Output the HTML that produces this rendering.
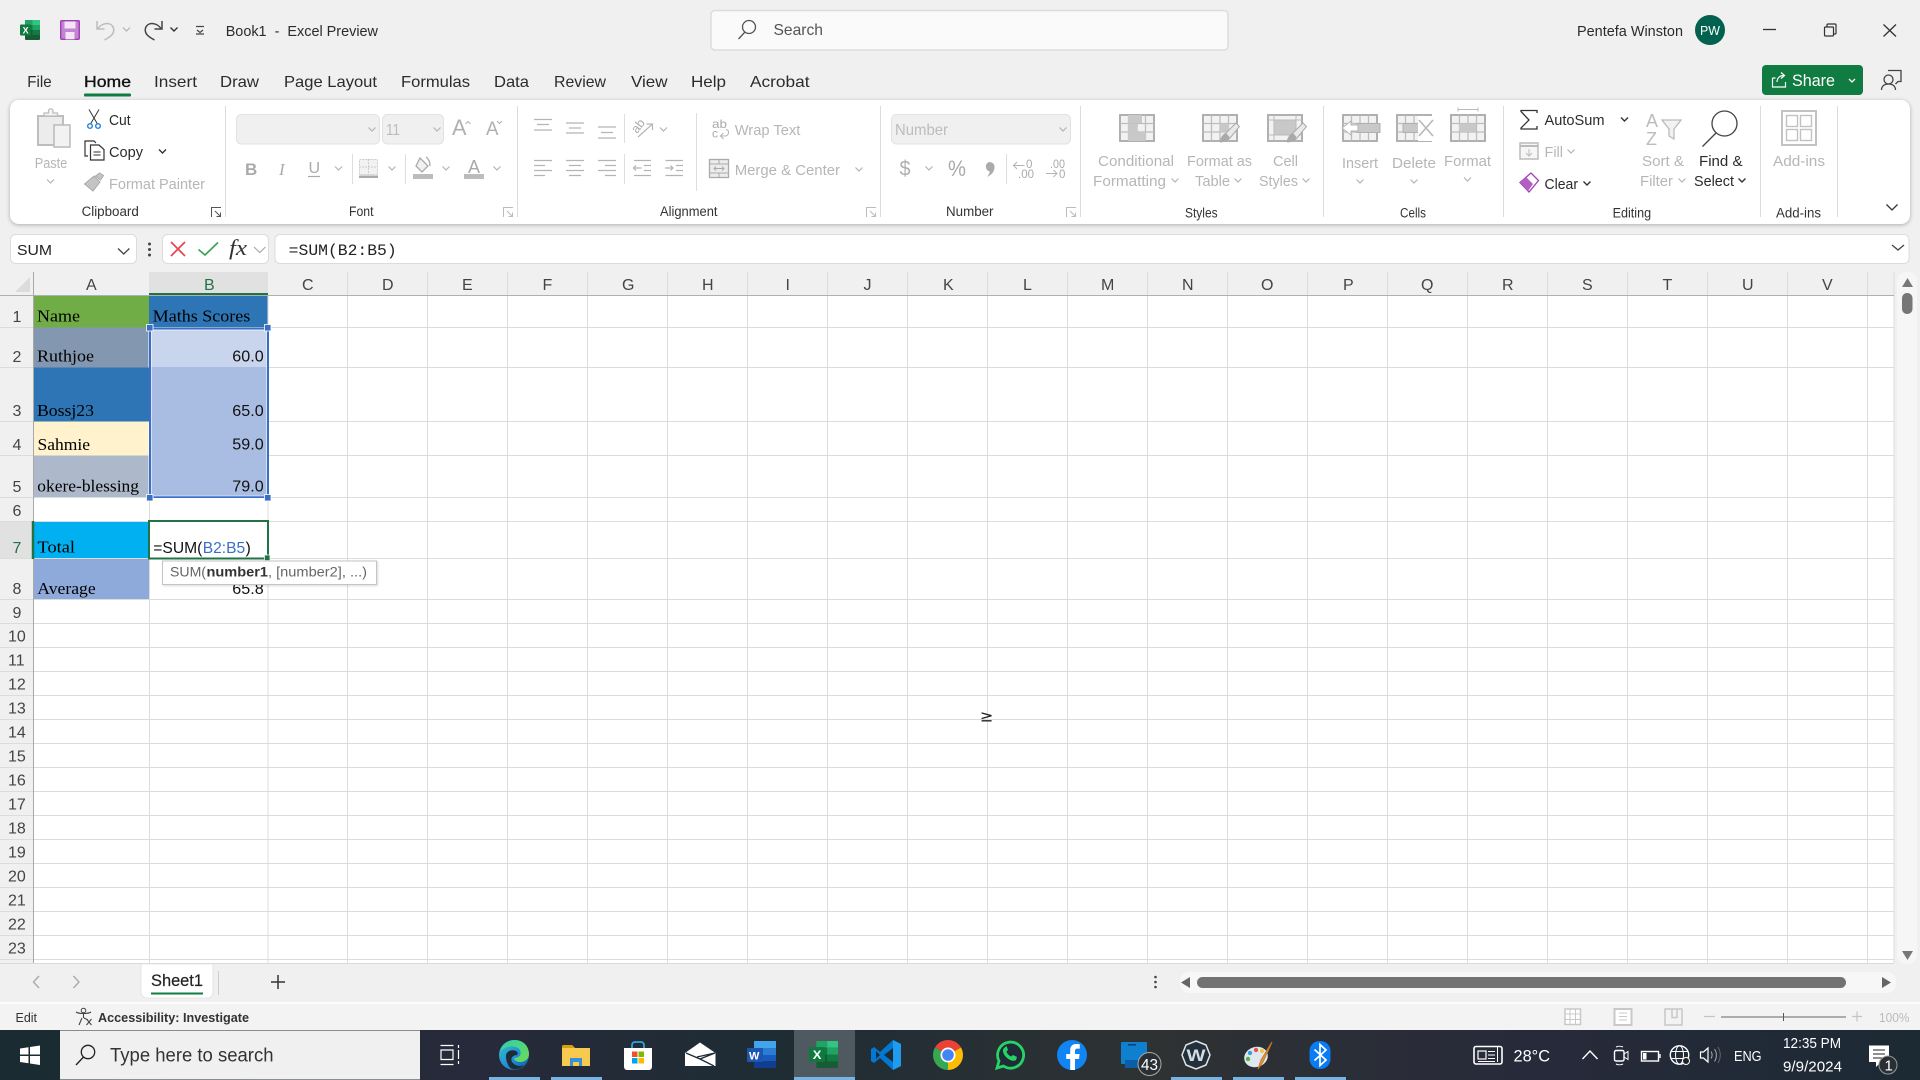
<!DOCTYPE html>
<html lang="en">
<head>
<meta charset="utf-8">
<title>Book1 - Excel Preview</title>
<style>
html,body{margin:0;padding:0;background:#f0f0f0;width:1920px;height:1080px;overflow:hidden}
svg{display:block}
text{font-family:"Liberation Sans",sans-serif;white-space:pre}
.d{fill:#2b2b2b;font-size:15px}
.g{fill:#b6b6b6;font-size:15px}
.l{fill:#333;font-size:13.5px}
.h{fill:#444;font-size:16px}
.s{fill:#000;font-size:16.5px;font-family:"Liberation Serif",serif}
.n{fill:#111;font-size:16px}
.w{fill:#fff}
.ic{fill:none;stroke:#b4b4b4;stroke-width:1.5}
.tray{fill:none;stroke:#fff;stroke-width:1.4}
</style>
</head>
<body>
<svg width="1920" height="1080" viewBox="0 0 1920 1080" xmlns="http://www.w3.org/2000/svg">
<defs>
<path id="cg" d="M-3.5-1.5 0 2 3.5-1.5" fill="none" stroke="#b4b4b4" stroke-width="1.2"/>
<path id="cd" d="M-3.5-1.5 0 2 3.5-1.5" fill="none" stroke="#333" stroke-width="1.4"/>
<g id="xl">
<rect x="5" width="15" height="20" rx="1" fill="#185c37"/>
<rect x="5" width="7.5" height="5" fill="#21a366"/><rect x="12.5" width="7.5" height="5" fill="#33c481"/>
<rect x="5" y="5" width="7.5" height="5" fill="#107c41"/><rect x="12.5" y="5" width="7.5" height="5" fill="#21a366"/>
<rect x="12.5" y="10" width="7.5" height="5" fill="#107c41"/>
<rect y="4.5" width="11" height="11" rx="1" fill="#0f7a3f"/>
<text x="2.6" y="13.5" class="w" style="font-size:9px;font-weight:bold">X</text>
</g>
<g id="tb">
<rect x="1" y="1" width="34" height="26" fill="#f2f2f2" stroke="#b0b0b0" stroke-width="2"/>
<path d="M1 9.5H35M1 18H35M9.5 1V27M18 1V27M26.500 1V27" stroke="#bdbdbd" stroke-width="1.300" fill="none"/>
</g>
<g id="br">
<path d="M0 0 3.500 3.500-6 15-10 18-15 19-13 14-10 10z" fill="#e9e9e9" stroke="#aaa" stroke-width="1"/>
<path d="M-10 10C-14 11-15 15-17 19-12 19-8 18-6.500 14z" fill="#aaa"/>
</g>
<linearGradient id="tk" x1="0" x2="1" y1="0" y2="0">
<stop offset="0" stop-color="#1c2b33"/><stop offset=".25" stop-color="#272a3a"/><stop offset=".4" stop-color="#1e2c34"/><stop offset=".6" stop-color="#2e3233"/><stop offset=".8" stop-color="#272a3a"/><stop offset="1" stop-color="#1c2a34"/>
</linearGradient>
<linearGradient id="ed" x1="0" x2="1" y1="0" y2="1">
<stop offset="0" stop-color="#36c6c0"/><stop offset=".55" stop-color="#1f8edc"/><stop offset="1" stop-color="#0c59a4"/>
</linearGradient>
<linearGradient id="eg" x1="0" x2="1" y1="0" y2="1">
<stop offset="0" stop-color="#2ecfb0"/><stop offset="1" stop-color="#6fdc50"/>
</linearGradient>
</defs>

<!-- window bg -->
<rect width="1920" height="1080" fill="#f0f0f0"/>

<!-- title bar -->
<use href="#xl" x="20" y="20"/>
<rect x="60.700" y="20.700" width="18.600" height="18.600" rx="1" fill="#c285d0" stroke="#a23fb6" stroke-width="1.400"/>
<rect x="64.500" y="21.500" width="11" height="7" fill="#f4e4f6"/>
<rect x="65.500" y="32" width="9" height="7.300" fill="#f4e4f6"/>
<path d="M97 21v8h7.500M97.800 29C101 23 111 21 113.500 28 115 34 110 37 104.500 40" fill="none" stroke="#bcbcbc" stroke-width="1.500"/>
<use href="#cg" x="126.500" y="29"/>
<path d="M162 21v8h-7.500M161.200 29C158 23 148 21 145.500 28 144 34 149 37 154.500 40" fill="none" stroke="#444" stroke-width="1.500"/>
<use href="#cd" x="174" y="29"/>
<path d="M196 26.500h8M197 30l3 2.500 3-2.500M196 34h8" fill="none" stroke="#444" stroke-width="1.200"/>
<text x="225.700" y="36" class="d" textLength="152.300" lengthAdjust="spacingAndGlyphs" style="font-size:15px">Book1  -  Excel Preview</text>

<rect x="711" y="10.500" width="517" height="39.500" rx="4" fill="#fafafa" stroke="#dcdcdc" stroke-width="1.500"/>
<circle cx="749" cy="27" r="6.500" fill="none" stroke="#555" stroke-width="1.300"/>
<path d="M745 32 738.500 39" stroke="#555" stroke-width="1.300"/>
<text x="773.500" y="35" fill="#555" style="font-size:16px" textLength="49.500" lengthAdjust="spacingAndGlyphs">Search</text>

<text x="1577" y="36" class="d" textLength="106" lengthAdjust="spacingAndGlyphs">Pentefa Winston</text>
<circle cx="1710" cy="30" r="15" fill="#00624f"/>
<text x="1700" y="35" class="w" style="font-size:13px" textLength="20" lengthAdjust="spacingAndGlyphs">PW</text>
<path d="M1763 29.500H1776" stroke="#333" stroke-width="1.300"/>
<path d="M1827 27v-2a1 1 0 0 1 1-1h7a1 1 0 0 1 1 1v8a1 1 0 0 1-1 1h-1" fill="none" stroke="#333" stroke-width="1.200"/>
<rect x="1824.500" y="27" width="9" height="9" rx="1" fill="none" stroke="#333" stroke-width="1.200"/>
<path d="M1883.500 24.500 1896 36.500M1896 24.500 1883.500 36.500" stroke="#333" stroke-width="1.300"/>

<!-- tabs -->
<text x="27.300" y="87" class="d" style="font-size:16px" textLength="24.300" lengthAdjust="spacingAndGlyphs">File</text>
<text x="84" y="87" style="font-size:16px;fill:#111;stroke:#111;stroke-width:.35" textLength="47" lengthAdjust="spacingAndGlyphs">Home</text>
<rect x="84" y="93.500" width="47" height="3" rx="1" fill="#107c41"/>
<text x="154" y="87" class="d" style="font-size:16px" textLength="43" lengthAdjust="spacingAndGlyphs">Insert</text>
<text x="220" y="87" class="d" style="font-size:16px" textLength="39" lengthAdjust="spacingAndGlyphs">Draw</text>
<text x="284" y="87" class="d" style="font-size:16px" textLength="93" lengthAdjust="spacingAndGlyphs">Page Layout</text>
<text x="401" y="87" class="d" style="font-size:16px" textLength="69" lengthAdjust="spacingAndGlyphs">Formulas</text>
<text x="494" y="87" class="d" style="font-size:16px" textLength="35" lengthAdjust="spacingAndGlyphs">Data</text>
<text x="554" y="87" class="d" style="font-size:16px" textLength="52" lengthAdjust="spacingAndGlyphs">Review</text>
<text x="631" y="87" class="d" style="font-size:16px" textLength="36.500" lengthAdjust="spacingAndGlyphs">View</text>
<text x="691" y="87" class="d" style="font-size:16px" textLength="35" lengthAdjust="spacingAndGlyphs">Help</text>
<text x="750" y="87" class="d" style="font-size:16px" textLength="59.500" lengthAdjust="spacingAndGlyphs">Acrobat</text>

<!-- share -->
<rect x="1762" y="65" width="101" height="30" rx="4" fill="#107c41"/>
<path d="M1772.500 78v9h13v-5M1777 82c0-4 3-6.500 6.500-6.500M1781 72.500l3.500 3-3.500 3M1772.500 78h3" fill="none" stroke="#fff" stroke-width="1.200"/>
<text x="1792" y="86" class="w" style="font-size:17px" textLength="43" lengthAdjust="spacingAndGlyphs">Share</text>
<path d="M1849 79l3 3 3-3" fill="none" stroke="#fff" stroke-width="1.300"/>
<circle cx="1888.500" cy="79.500" r="4.500" fill="none" stroke="#444" stroke-width="1.300"/>
<path d="M1881.500 90c0-4 3-6 7-6s7 2 7 6M1888 70.500h13v11h-3l-2.500 2.500" fill="none" stroke="#444" stroke-width="1.300"/>

<!-- ribbon -->
<rect x="10" y="100" width="1900" height="124" rx="9" fill="#fff" style="filter:drop-shadow(0 1px 2px rgba(0,0,0,.28))"/>
<path d="M225.500 106V217M517.500 106V217M880.500 106V217M1080.500 106V217M1323.500 106V217M1503.500 106V217M1760.500 106V217M1837.500 106V217" stroke="#dcdcdc" stroke-width="1"/>
<path d="M352.500 154V184M405.500 154V184M624.500 114V143M624.500 154V184M696.500 113V191M1006.500 154V184" stroke="#dedede" stroke-width="1"/>

<!-- clipboard -->
<rect x="38" y="116" width="25" height="29" fill="#ececec" stroke="#bdbdbd" stroke-width="2"/>
<path d="M44 116v-3h4.500v-2a2 2 0 0 1 4.500 0v2H57.500v3z" fill="#f4f4f4" stroke="#bdbdbd" stroke-width="1.300"/>
<rect x="54" y="125" width="16" height="22" fill="#f2f2f2" stroke="#bdbdbd" stroke-width="1.600"/>
<text x="34.700" y="168" class="g" style="font-size:15px" textLength="32.600" lengthAdjust="spacingAndGlyphs">Paste</text>
<use href="#cg" x="50.500" y="181"/>
<path d="M89 109.500 97.500 124M99 109.500 90.500 124" stroke="#333" stroke-width="1" fill="none"/>
<circle cx="90" cy="126" r="2.300" fill="none" stroke="#2e8ad6" stroke-width="1.500"/><circle cx="98" cy="126" r="2.300" fill="none" stroke="#2e8ad6" stroke-width="1.500"/>
<text x="109" y="125" class="d" textLength="21.600" lengthAdjust="spacingAndGlyphs">Cut</text>
<path d="M88 156h-3v-15h9l2 2M94 145h-3.500v15H104v-10.500L99 145z" fill="#fff" stroke="#333" stroke-width="1.200"/>
<path d="M93.500 152h7M93.500 155h7" stroke="#333"/>
<text x="109" y="157" class="d" textLength="34" lengthAdjust="spacingAndGlyphs">Copy</text>
<use href="#cd" x="162.500" y="151"/>
<path d="M84.500 184 94 176l6 6-7 9zM95.500 176l4-3 4 2.500-3 4.500z" fill="#c4c4c4" stroke="#aaa"/>
<text x="109" y="189" class="g" textLength="96" lengthAdjust="spacingAndGlyphs">Format Painter</text>
<text x="81.600" y="216" class="l" textLength="57.200" lengthAdjust="spacingAndGlyphs">Clipboard</text>
<path d="M211.500 217v-9.500h9.500M215 211l5 5M216.500 216.500h4v-4" fill="none" stroke="#555" stroke-width="1"/>

<!-- font -->
<rect x="236.500" y="114.500" width="143" height="29.500" rx="5" fill="#f0f0f0" stroke="#e2e2e2"/>
<use href="#cg" x="372" y="129"/>
<rect x="382.500" y="114.500" width="61" height="29.500" rx="5" fill="#f0f0f0" stroke="#e2e2e2"/>
<text x="386" y="135" fill="#bcbcbc" style="font-size:16px" textLength="14" lengthAdjust="spacingAndGlyphs">11</text>
<use href="#cg" x="437" y="129"/>
<text x="452" y="135" fill="#b0b0b0" style="font-size:22px" textLength="14.500" lengthAdjust="spacingAndGlyphs">A</text>
<path d="M465.500 124l2.500-2.500 2.500 2.500" fill="none" stroke="#b0b0b0"/>
<text x="486" y="135" fill="#b0b0b0" style="font-size:19px" textLength="12.500" lengthAdjust="spacingAndGlyphs">A</text>
<path d="M497 121l2.500 2.500 2.500-2.500" fill="none" stroke="#b0b0b0"/>
<text x="245" y="175" fill="#aaa" style="font-size:17px;font-weight:bold">B</text>
<text x="279" y="175" fill="#aaa" style="font-size:17px;font-style:italic;font-family:'Liberation Serif',serif">I</text>
<text x="308.500" y="173" fill="#aaa" style="font-size:16px">U</text>
<path d="M308 176.500H320" stroke="#aaa" stroke-width="1.200"/>
<use href="#cg" x="338.500" y="168"/>
<rect x="359.500" y="159.500" width="18" height="15" fill="#f2f2f2" stroke="#ccc" stroke-dasharray="2 1"/>
<path d="M368.500 159V175M359 167H378" stroke="#ccc" stroke-dasharray="2 1"/>
<rect x="359" y="175.500" width="19" height="2.500" fill="#aaa"/>
<use href="#cg" x="392" y="168"/>
<path d="M420 158l8 8-6 6-6-6zM426 157c3 2 4 5 4 9" fill="#f0f0f0" stroke="#aaa" stroke-width="1.300"/>
<rect x="413" y="174" width="20" height="5" fill="#bcbcbc"/>
<use href="#cg" x="446" y="168"/>
<text x="468" y="173" fill="#aaa" style="font-size:18px">A</text>
<rect x="464" y="174" width="20" height="5" fill="#bcbcbc"/>
<use href="#cg" x="497" y="168"/>
<text x="349" y="216" class="l" textLength="24.500" lengthAdjust="spacingAndGlyphs">Font</text>
<path d="M503.500 217v-9.500h9.500M507 211l5 5M508.500 216.500h4v-4" fill="none" stroke="#bbb" stroke-width="1"/>

<!-- alignment -->
<path d="M534 119.500h18M537 124.500h12M534 130h18M566 123h18M569 128h12M566 133h18M598 127h18M601 132.500h12M598 138h18" class="ic" style="stroke-width:1.300"/>
<path d="M534 160.500h18M534 165.500h11M534 170.500h18M534 175.500h11M566 160.500h18M569 165.500h12M566 170.500h18M569 175.500h12M598 160.500h18M605 165.500h11M598 170.500h18M605 175.500h11" class="ic" style="stroke-width:1.300"/>
<text transform="translate(637,134) rotate(-52)" fill="#aaa" style="font-size:12.500px">ab</text>
<path d="M638 137 652.500 124M646.500 124H652.500V130" class="ic" style="stroke-width:1.200"/>
<use href="#cg" x="663.500" y="129"/>
<path d="M634 160.500h17M644 165.500h7M644 170.500h7M634 175.500h17M633.500 168h8M636 165.500l-2.500 2.500 2.500 2.500" class="ic" style="stroke-width:1.200"/>
<path d="M665.500 160.500h17.500M676 165.500h7M676 170.500h7M665.500 175.500h17.500M665 168h8M670.500 165.500l2.500 2.500-2.500 2.500" class="ic" style="stroke-width:1.200"/>
<text x="712" y="128" fill="#aaa" style="font-size:12px" textLength="15" lengthAdjust="spacingAndGlyphs">ab</text>
<text x="712" y="137.500" fill="#aaa" style="font-size:12px">c</text>
<path d="M721 136h4c4 0 5-6 1-6.500M723.500 133l-3 3 3 3" class="ic" style="stroke-width:1.100"/>
<text x="734.700" y="135" class="g" textLength="65.700" lengthAdjust="spacingAndGlyphs">Wrap Text</text>
<rect x="709.500" y="159.500" width="19" height="18" fill="#ececec" stroke="#aaa" stroke-width="1.300"/>
<path d="M709 164h20M709 173h20M719 159v5M719 173v5M714 168.500h10M716 166.500l-2 2 2 2M722 166.500l2 2-2 2" fill="none" stroke="#aaa"/>
<text x="734.700" y="175" class="g" textLength="105.300" lengthAdjust="spacingAndGlyphs">Merge &amp; Center</text>
<use href="#cg" x="859" y="169"/>
<text x="660" y="216" class="l" textLength="57.500" lengthAdjust="spacingAndGlyphs">Alignment</text>
<path d="M866.500 217v-9.500h9.500M870 211l5 5M871.500 216.500h4v-4" fill="none" stroke="#bbb" stroke-width="1"/>

<!-- number -->
<rect x="891.500" y="114.500" width="179" height="29.500" rx="5" fill="#f0f0f0" stroke="#e2e2e2"/>
<text x="895" y="135" fill="#bcbcbc" style="font-size:16px" textLength="53" lengthAdjust="spacingAndGlyphs">Number</text>
<use href="#cg" x="1063" y="129"/>
<text x="899.500" y="175.500" fill="#b0b0b0" style="font-size:21px" textLength="11" lengthAdjust="spacingAndGlyphs">$</text>
<use href="#cg" x="929" y="168"/>
<text x="948" y="176" fill="#aaa" style="font-size:22px" textLength="18" lengthAdjust="spacingAndGlyphs">%</text>
<path d="M989 162a5 5 0 0 1 5.500 5c0 4.500-3 8-7.500 10 1.500-2 2.500-3.500 2.800-5.500A5 5 0 0 1 989 162z" fill="#aaa"/>
<text x="1026" y="168" fill="#aaa" style="font-size:11.500px">0</text>
<text x="1018" y="178" fill="#aaa" style="font-size:11.500px" textLength="16" lengthAdjust="spacingAndGlyphs">.00</text>
<path d="M1013.500 165.500h11M1017 162 1013.500 165.500 1017 169" class="ic" style="stroke-width:1"/>
<text x="1050" y="168" fill="#aaa" style="font-size:11.500px" textLength="15" lengthAdjust="spacingAndGlyphs">.00</text>
<text x="1059" y="178" fill="#aaa" style="font-size:11.500px">0</text>
<path d="M1046 173.500h11M1053.500 170 1057 173.500 1053.500 177" class="ic" style="stroke-width:1"/>
<text x="946" y="216" class="l" textLength="47.500" lengthAdjust="spacingAndGlyphs">Number</text>
<path d="M1066.500 217v-9.500h9.500M1070 211l5 5M1071.500 216.500h4v-4" fill="none" stroke="#bbb" stroke-width="1"/>

<!-- styles -->
<g transform="translate(1119,114)"><use href="#tb"/><rect x="9" y="1" width="14" height="8" fill="#c8c8c8"/><rect x="9" y="9.500" width="9" height="8.500" fill="#c8c8c8"/><rect x="9" y="18" width="18" height="9" fill="#c8c8c8"/></g>
<text x="1098" y="166" class="g" textLength="76" lengthAdjust="spacingAndGlyphs">Conditional</text>
<text x="1093" y="186" class="g" textLength="73" lengthAdjust="spacingAndGlyphs">Formatting</text>
<use href="#cg" x="1175" y="180"/>
<g transform="translate(1202,114)"><use href="#tb"/><rect x="18" y="9.500" width="9" height="8.500" fill="#c8c8c8"/><use href="#br" x="34" y="9"/></g>
<text x="1187" y="166" class="g" textLength="65" lengthAdjust="spacingAndGlyphs">Format as</text>
<text x="1195" y="186" class="g" textLength="35" lengthAdjust="spacingAndGlyphs">Table</text>
<use href="#cg" x="1238" y="180"/>
<g transform="translate(1267,114)"><rect x="1" y="1" width="34" height="26" fill="#f2f2f2" stroke="#b0b0b0" stroke-width="2"/><rect x="7" y="6" width="22" height="15" fill="#c8c8c8"/><path d="M1 6H35M7 1V27M1 21H35M29 1V27" stroke="#bbb"/><use href="#br" x="36" y="9"/></g>
<text x="1273" y="166" class="g" textLength="25" lengthAdjust="spacingAndGlyphs">Cell</text>
<text x="1259" y="186" class="g" textLength="39" lengthAdjust="spacingAndGlyphs">Styles</text>
<use href="#cg" x="1306" y="180"/>
<text x="1185" y="217.500" class="l" textLength="32.600" lengthAdjust="spacingAndGlyphs">Styles</text>

<!-- cells -->
<g transform="translate(1342,114)"><use href="#tb"/><rect x="15" y="9.500" width="23" height="9" fill="#c8c8c8" stroke="#b0b0b0"/><path d="M16 11h-7v-4L0 14l9 7v-4h7z" fill="#fff" stroke="#b6b6b6"/></g>
<text x="1342" y="168" class="g" textLength="36" lengthAdjust="spacingAndGlyphs">Insert</text>
<use href="#cg" x="1360" y="181"/>
<g transform="translate(1396,114)"><use href="#tb"/><rect x="7" y="9.500" width="18" height="9" fill="#c8c8c8" stroke="#b0b0b0"/><rect x="22" y="2" width="16" height="25" fill="#fff"/><path d="M23 6 37 22M37 6 23 22" stroke="#b6b6b6" stroke-width="1.500"/></g>
<text x="1392" y="168" class="g" textLength="44" lengthAdjust="spacingAndGlyphs">Delete</text>
<use href="#cg" x="1414" y="181"/>
<g transform="translate(1450,114)"><use href="#tb"/><rect x="9" y="9.500" width="17" height="8.500" fill="#c8c8c8"/></g>
<path d="M1458 109.500h20M1458 107.500v4M1478 107.500v4" stroke="#bbb"/>
<text x="1444" y="166" class="g" textLength="47" lengthAdjust="spacingAndGlyphs">Format</text>
<use href="#cg" x="1467.500" y="179"/>
<text x="1400" y="217.500" class="l" textLength="26" lengthAdjust="spacingAndGlyphs">Cells</text>

<!-- editing -->
<path d="M1537 113v-2.500h-16v1l8 8.500-8 8v1h16V126" fill="none" stroke="#333" stroke-width="1.300"/>
<text x="1544.500" y="125" class="d" textLength="60" lengthAdjust="spacingAndGlyphs">AutoSum</text>
<use href="#cd" x="1624.500" y="119"/>
<rect x="1520" y="143" width="18" height="16" fill="#f6f6f6" stroke="#bbb" stroke-width="1.500"/>
<path d="M1520 146h18" stroke="#bbb" stroke-width="2"/><path d="M1529 149v7M1526 153l3 3 3-3" fill="none" stroke="#bbb"/>
<text x="1544.500" y="157" class="g" textLength="18.500" lengthAdjust="spacingAndGlyphs">Fill</text>
<use href="#cg" x="1571" y="151"/>
<path d="M1520 182.500 1531 173l7.500 7.500-9.500 11.500z" fill="#fff" stroke="#a23fb6" stroke-width="1.300"/>
<path d="M1520 182.500 1526 177l7 7-5 7z" fill="#b25ec4"/>
<text x="1544.500" y="189" class="d" textLength="33.500" lengthAdjust="spacingAndGlyphs">Clear</text>
<use href="#cd" x="1587" y="183"/>
<text x="1646" y="127" fill="#bcbcbc" style="font-size:18px">A</text>
<text x="1646" y="145" fill="#bcbcbc" style="font-size:18px">Z</text>
<path d="M1662 120h19l-7 9v10l-5-3v-7z" fill="#f2f2f2" stroke="#bbb" stroke-width="1.300"/>
<text x="1642" y="166" class="g" textLength="42" lengthAdjust="spacingAndGlyphs">Sort &amp;</text>
<text x="1640" y="186" class="g" textLength="33" lengthAdjust="spacingAndGlyphs">Filter</text>
<use href="#cg" x="1682" y="180"/>
<circle cx="1724.500" cy="123.500" r="12.500" fill="#fff" stroke="#444" stroke-width="1.300"/>
<path d="M1716 133 1702.500 146.500" stroke="#444" stroke-width="1.300"/>
<text x="1699" y="166" class="d" textLength="43.500" lengthAdjust="spacingAndGlyphs">Find &amp;</text>
<text x="1694" y="186" class="d" textLength="40" lengthAdjust="spacingAndGlyphs">Select</text>
<use href="#cd" x="1742" y="180"/>
<text x="1612.600" y="217.500" class="l" textLength="38.500" lengthAdjust="spacingAndGlyphs">Editing</text>

<!-- add-ins -->
<rect x="1782" y="111" width="34" height="34" fill="none" stroke="#c2c2c2" stroke-width="2"/>
<rect x="1786.500" y="115.500" width="11" height="11" fill="none" stroke="#c2c2c2" stroke-width="1.400"/>
<rect x="1800.500" y="115.500" width="11" height="11" fill="none" stroke="#c2c2c2" stroke-width="1.400"/>
<rect x="1786.500" y="129.500" width="11" height="11" fill="none" stroke="#c2c2c2" stroke-width="1.400"/>
<rect x="1800.500" y="129.500" width="11" height="11" fill="none" stroke="#c2c2c2" stroke-width="1.400"/>
<text x="1773" y="166" class="g" textLength="52" lengthAdjust="spacingAndGlyphs">Add-ins</text>
<text x="1776" y="217.500" class="l" textLength="45" lengthAdjust="spacingAndGlyphs">Add-ins</text>
<path d="M1886.500 204.500l5.500 5.500 5.500-5.500" fill="none" stroke="#333" stroke-width="1.300"/>

<!-- formula bar -->
<rect x="10.500" y="234.500" width="126" height="29" rx="5" fill="#fff" stroke="#dcdcdc"/>
<text x="17" y="255" fill="#222" style="font-size:15px" textLength="35" lengthAdjust="spacingAndGlyphs">SUM</text>
<path d="M118 248.500l5.700 5.500 5.700-5.500" fill="none" stroke="#444" stroke-width="1.300"/>
<circle cx="149.500" cy="244" r="1.500" fill="#444"/><circle cx="149.500" cy="249.500" r="1.500" fill="#444"/><circle cx="149.500" cy="255" r="1.500" fill="#444"/>
<rect x="162.500" y="234.500" width="106" height="29" rx="5" fill="#fff" stroke="#dcdcdc"/>
<path d="M171 242 185 256M185 242 171 256" stroke="#e8434f" stroke-width="1.700"/>
<path d="M198.500 249.500 205 255 218 242.500" fill="none" stroke="#3aa655" stroke-width="1.700"/>
<text x="229" y="255" fill="#333" style="font-size:22px;font-style:italic;font-family:'Liberation Serif',serif" textLength="18" lengthAdjust="spacingAndGlyphs">fx</text>
<path d="M254 247l5.700 5.500 5.700-5.500" fill="none" stroke="#aaa" stroke-width="1.200"/>
<rect x="275" y="234.500" width="1634" height="29" rx="5" fill="#fff" stroke="#dcdcdc"/>
<text x="288.700" y="255" fill="#222" style="font-size:16px;font-family:'Liberation Mono',monospace" textLength="108" lengthAdjust="spacingAndGlyphs">=SUM(B2:B5)</text>
<path d="M1892 245l6 5 6-5" fill="none" stroke="#444" stroke-width="1.300"/>

<!-- sheet grid -->
<rect x="33" y="295" width="1861" height="668" fill="#fff"/>
<rect x="149" y="272" width="119" height="23" fill="#e1e1e1"/>
<rect x="0" y="521" width="33" height="38" fill="#e1e1e1"/>

<!-- cell fills -->
<rect x="33.500" y="296" width="115.500" height="31.500" fill="#70ad47"/>
<rect x="149" y="296" width="119" height="31.500" fill="#2e75b6"/>
<rect x="33.500" y="327.500" width="115" height="40" fill="#8497b0"/>
<rect x="33.500" y="367.500" width="115.500" height="54" fill="#2e75b6"/>
<rect x="33.500" y="421.500" width="115" height="34" fill="#fff2cc"/>
<rect x="33.500" y="455.500" width="115" height="42" fill="#adb9ca"/>
<rect x="33.500" y="521.500" width="115.500" height="37" fill="#00b0f0"/>
<rect x="33.500" y="558.500" width="116.500" height="40.500" fill="#8eaadb"/>

<!-- gridlines -->
<path d="M149.500 497V963M268 295V963M347.500 272V963M427.500 272V963M507.500 272V963M587.500 272V963M667.500 272V963M747.500 272V963M827.500 272V963M907.500 272V963M987.500 272V963M1067.500 272V963M1147.500 272V963M1227.500 272V963M1307.500 272V963M1387.500 272V963M1467.500 272V963M1547.500 272V963M1627.500 272V963M1707.500 272V963M1787.500 272V963M1867.500 272V963M1894 272V963" stroke="#dcdcdc" fill="none"/>
<path d="M0 327.500H33M149 327.500H1894M0 367.500H33M268 367.500H1894M0 421.500H33M268 421.500H1894M0 455.500H33M268 455.500H1894M0 497.500H33M268 497.500H1894M0 521.500H1894M0 558.500H1894M0 599.500H1894M0 623.500H1894M0 647.500H1894M0 671.500H1894M0 695.500H1894M0 719.500H1894M0 743.500H1894M0 767.500H1894M0 791.500H1894M0 815.500H1894M0 839.500H1894M0 863.500H1894M0 887.500H1894M0 911.500H1894M0 935.500H1894M0 959.500H1894" stroke="#dcdcdc" fill="none"/>
<path d="M0 295.500H1894" stroke="#b0b0b0" stroke-width="1"/>
<path d="M33.500 272V963" stroke="#a8a8a8"/>
<path d="M149 294H268" stroke="#217346" stroke-width="2"/>
<path d="M33 521V559" stroke="#217346" stroke-width="2.500"/>
<path d="M30 277V292H15z" fill="#dcdcdc"/>

<!-- headers -->
<text x="86" y="290" class="h">A</text><text x="204" y="290" style="fill:#217346;font-size:16px">B</text>
<text x="302" y="290" class="h">C</text><text x="382" y="290" class="h">D</text><text x="462" y="290" class="h">E</text><text x="542.500" y="290" class="h">F</text><text x="622" y="290" class="h">G</text><text x="702" y="290" class="h">H</text><text x="785.500" y="290" class="h">I</text><text x="863.500" y="290" class="h">J</text><text x="943" y="290" class="h">K</text><text x="1023" y="290" class="h">L</text><text x="1101" y="290" class="h">M</text><text x="1182" y="290" class="h">N</text><text x="1261" y="290" class="h">O</text><text x="1343" y="290" class="h">P</text><text x="1421" y="290" class="h">Q</text><text x="1502" y="290" class="h">R</text><text x="1582" y="290" class="h">S</text><text x="1662.500" y="290" class="h">T</text><text x="1742" y="290" class="h">U</text><text x="1822" y="290" class="h">V</text>
<text x="12.500" y="322" class="h">1</text><text x="12.500" y="362" class="h">2</text><text x="12.500" y="416" class="h">3</text><text x="12.500" y="450" class="h">4</text><text x="12.500" y="492" class="h">5</text><text x="12.500" y="516" class="h">6</text><text x="12.500" y="553" style="fill:#217346;font-size:16px">7</text><text x="12.500" y="594" class="h">8</text><text x="12.500" y="618" class="h">9</text>
<text x="8" y="641.500" class="h">10</text><text x="8" y="665.500" class="h">11</text><text x="8" y="689.500" class="h">12</text><text x="8" y="713.500" class="h">13</text><text x="8" y="737.500" class="h">14</text><text x="8" y="761.500" class="h">15</text><text x="8" y="785.500" class="h">16</text><text x="8" y="809.500" class="h">17</text><text x="8" y="833.500" class="h">18</text><text x="8" y="857.500" class="h">19</text><text x="8" y="881.500" class="h">20</text><text x="8" y="905.500" class="h">21</text><text x="8" y="929.500" class="h">22</text><text x="8" y="953.500" class="h">23</text>

<!-- selection -->
<rect x="150" y="328.500" width="118" height="168.500" fill="#a9bce2"/>
<rect x="151" y="329.500" width="115.500" height="37.500" fill="#c9d5ec"/>
<rect x="150" y="328.500" width="118" height="168.500" fill="none" stroke="#3a6fc8" stroke-width="2"/>
<path d="M151.500 330H266.500V496H151.500z" fill="none" stroke="#fff" stroke-width=".8" opacity=".7"/>
<rect x="146.500" y="324.500" width="6.500" height="6.500" fill="#3a6fc8" stroke="#fff" stroke-width=".8"/>
<rect x="264.500" y="324.500" width="6.500" height="6.500" fill="#3a6fc8" stroke="#fff" stroke-width=".8"/>
<rect x="146.500" y="494.500" width="6.500" height="6.500" fill="#3a6fc8" stroke="#fff" stroke-width=".8"/>
<rect x="264.500" y="494.500" width="6.500" height="6.500" fill="#3a6fc8" stroke="#fff" stroke-width=".8"/>

<!-- cell text -->
<text x="37" y="321.700" class="s" textLength="43" lengthAdjust="spacingAndGlyphs">Name</text>
<text x="152.700" y="321.700" class="s" textLength="97.600" lengthAdjust="spacingAndGlyphs">Maths Scores</text>
<text x="37" y="361.700" class="s" textLength="57" lengthAdjust="spacingAndGlyphs">Ruthjoe</text>
<text x="37" y="416" class="s" textLength="57" lengthAdjust="spacingAndGlyphs">Bossj23</text>
<text x="37.500" y="450" class="s" textLength="52.500" lengthAdjust="spacingAndGlyphs">Sahmie</text>
<text x="37.300" y="491.700" class="s" textLength="101.700" lengthAdjust="spacingAndGlyphs">okere-blessing</text>
<text x="37.500" y="552.700" class="s" textLength="37.500" lengthAdjust="spacingAndGlyphs">Total</text>
<text x="37.300" y="594" class="s" textLength="58.400" lengthAdjust="spacingAndGlyphs">Average</text>
<text x="232.300" y="361.500" class="n" textLength="31.400" lengthAdjust="spacingAndGlyphs">60.0</text>
<text x="232.300" y="416" class="n" textLength="31.400" lengthAdjust="spacingAndGlyphs">65.0</text>
<text x="232.300" y="449.500" class="n" textLength="31.400" lengthAdjust="spacingAndGlyphs">59.0</text>
<text x="232.300" y="491.500" class="n" textLength="31.400" lengthAdjust="spacingAndGlyphs">79.0</text>
<text x="232.300" y="594" class="n" textLength="31.400" lengthAdjust="spacingAndGlyphs">65.8</text>

<!-- active edit cell -->
<rect x="149" y="521" width="119" height="37.500" fill="#fff" stroke="#217346" stroke-width="2"/>
<rect x="264.500" y="555" width="5.500" height="5.500" fill="#217346" stroke="#fff" stroke-width=".7"/>
<text x="153.300" y="553" fill="#111" style="font-size:16px" textLength="49" lengthAdjust="spacingAndGlyphs">=SUM(</text>
<text x="202.700" y="553" fill="#3a6fc8" style="font-size:16px" textLength="42.500" lengthAdjust="spacingAndGlyphs">B2:B5</text>
<text x="245.500" y="553" fill="#111" style="font-size:16px">)</text>

<!-- tooltip -->
<rect x="162.500" y="561" width="214" height="23.500" fill="#fff" stroke="#c4c4c4" style="filter:drop-shadow(1px 1px 1px rgba(0,0,0,.15))"/>
<text x="170" y="576.500" fill="#666" style="font-size:14px" textLength="36" lengthAdjust="spacingAndGlyphs">SUM(</text>
<text x="206.500" y="576.500" fill="#333" style="font-size:14px;font-weight:bold" textLength="61.500" lengthAdjust="spacingAndGlyphs">number1</text>
<text x="268" y="576.500" fill="#666" style="font-size:14px" textLength="99" lengthAdjust="spacingAndGlyphs">, [number2], ...)</text>

<!-- cursor -->
<text x="980" y="721.500" fill="#222" style="font-size:16px;font-family:'DejaVu Sans',sans-serif">≥</text>

<!-- v scrollbar -->
<rect x="1897" y="272" width="20" height="692" rx="9" fill="#f6f6f6"/>
<path d="M1907.500 278 1913 287H1902z" fill="#777"/>
<rect x="1902" y="293" width="10.500" height="21" rx="5" fill="#777"/>
<path d="M1907.500 960 1913 951H1902z" fill="#777"/>

<!-- bottom bars -->
<path d="M0 963.500H1894" stroke="#dadada"/>
<rect x="0" y="964" width="1920" height="39" fill="#f0f0f0"/>
<path d="M141 964H213V992a6 6 0 0 1-6 6H147a6 6 0 0 1-6-6z" fill="#fff" stroke="#e0e0e0" stroke-width=".8"/>
<text x="151" y="986" style="font-size:17px;fill:#222;stroke:#222;stroke-width:.2" textLength="52" lengthAdjust="spacingAndGlyphs">Sheet1</text>
<rect x="151" y="992.500" width="52" height="2" fill="#107c41"/>
<path d="M218.500 971V995" stroke="#ccc"/>
<path d="M271 982H285M278 975V989" stroke="#333" stroke-width="1.500"/>
<path d="M39 976 33.500 982 39 988M73.500 976 79 982 73.500 988" fill="none" stroke="#aaa" stroke-width="1.400"/>
<circle cx="1155.500" cy="977" r="1.300" fill="#444"/><circle cx="1155.500" cy="982" r="1.300" fill="#444"/><circle cx="1155.500" cy="987" r="1.300" fill="#444"/>
<rect x="1180" y="972" width="716" height="21" rx="9" fill="#f7f7f7"/>
<path d="M1181 982.500 1190 977V988z" fill="#666"/>
<rect x="1197" y="977" width="649" height="11" rx="5.500" fill="#727272"/>
<path d="M1891 982.500 1882 977V988z" fill="#666"/>

<!-- status bar -->
<rect x="0" y="1003" width="1920" height="27" fill="#f3f3f3"/>
<path d="M0 1003H1920" stroke="#fff" stroke-width="1.500"/>
<text x="15.500" y="1022" fill="#333" style="font-size:13px" textLength="21.500" lengthAdjust="spacingAndGlyphs">Edit</text>
<circle cx="83.500" cy="1010.500" r="2.300" fill="none" stroke="#444"/>
<path d="M76 1012c3 2 12 2 15 0M83.500 1014v4M79 1025l3-7M84 1018l4 2M86.500 1019l5 6M91.500 1019l-5 6" fill="none" stroke="#444" stroke-width="1.100"/>
<text x="98" y="1022" fill="#333" style="font-size:13px;font-weight:bold" textLength="151" lengthAdjust="spacingAndGlyphs">Accessibility: Investigate</text>
<rect x="1565" y="1009" width="15.500" height="15.500" fill="#fff" stroke="#c8c8c8" stroke-width="1.500"/>
<path d="M1570 1009v15.500M1575.500 1009v15.500M1565 1014h15.500M1565 1019.500h15.500" stroke="#c8c8c8"/>
<rect x="1614.500" y="1009" width="17" height="16" fill="#fff" stroke="#c8c8c8" stroke-width="2"/>
<path d="M1619 1013h8M1619 1016.500h8M1619 1020h8" stroke="#c8c8c8"/>
<path d="M1665 1009h17v16h-17zM1672 1009v8.500h5V1009" fill="none" stroke="#c8c8c8" stroke-width="1.500"/>
<path d="M1704 1016.500h11M1852 1016.500h10M1857 1011.500v10" stroke="#c4c4c4" stroke-width="1.200"/>
<path d="M1721 1017H1846" stroke="#666"/>
<path d="M1783.500 1013V1021" stroke="#555"/>
<text x="1879" y="1022" fill="#bbb" style="font-size:13px" textLength="30.500" lengthAdjust="spacingAndGlyphs">100%</text>

<!-- taskbar -->
<rect x="0" y="1030" width="1920" height="50" fill="url(#tk)"/>
<rect x="0" y="1030" width="60" height="50" fill="#1b2b32"/>
<path d="M20 1048.500 28.500 1047.300V1054.500H20zM30 1047 40 1045.500V1054.500H30zM20 1056H28.500V1063.200L20 1062zM30 1056H40V1065L30 1063.500z" fill="#fff"/>
<rect x="60" y="1030.500" width="360" height="49" fill="#f0f0f0"/>
<circle cx="88" cy="1052" r="6.700" fill="none" stroke="#222" stroke-width="1.300"/>
<path d="M83.500 1057 76 1065" stroke="#222" stroke-width="1.400"/>
<text x="110" y="1061.700" fill="#333" style="font-size:19px" textLength="163.500" lengthAdjust="spacingAndGlyphs">Type here to search</text>

<path d="M440.500 1045.500h13M440.500 1064.500h13M441 1050h12v9.500h-12zM458.500 1045v3M458.500 1050v9M458.500 1061v3" fill="none" stroke="#fff" stroke-width="1.200"/>

<!-- active excel -->
<rect x="794" y="1030" width="61" height="50" fill="#4f5a60"/>
<!-- underlines -->
<rect x="489" y="1077" width="51" height="3" fill="#76b4e3"/>
<rect x="551" y="1077" width="51" height="3" fill="#76b4e3"/>
<rect x="794" y="1077" width="61" height="3" fill="#76b4e3"/>
<rect x="1171" y="1077" width="51" height="3" fill="#76b4e3"/>
<rect x="1233" y="1077" width="51" height="3" fill="#76b4e3"/>
<rect x="1295" y="1077" width="51" height="3" fill="#76b4e3"/>

<!-- edge -->
<circle cx="514" cy="1055" r="15" fill="url(#ed)"/>
<path d="M500 1052C502 1043 510 1040 515 1040 523 1040 529 1046 529 1054 529 1059 525 1062 520 1062 516 1062 514 1060 514 1058 519 1058 522 1055 520 1050 517 1045 505 1045 500 1052z" fill="url(#eg)"/>
<path d="M506 1056c0-5 6-7 10-5 2 1 2 3 1 4-4 0-7 3-5 7 3 4 8 5 12 3-4 4-8 5-12 4-4-2-6-8-6-13z" fill="#1f2b35"/>
<!-- explorer -->
<path d="M562 1047a2 2 0 0 1 2-2h8l3 3h15v18h-28z" fill="#f7c94e"/>
<path d="M562 1047a2 2 0 0 1 2-2h8l3 3h-13z" fill="#d99f0b"/>
<path d="M570 1066v-8h12v8h-3v-4h-6v4z" fill="#3a8fd8"/>
<rect x="573" y="1062" width="6" height="4" fill="#f7c94e"/>
<!-- store -->
<path d="M624 1048h28v19a3 3 0 0 1-3 3h-22a3 3 0 0 1-3-3z" fill="#fff"/>
<path d="M632 1048v-3a3 3 0 0 1 3-3h6a3 3 0 0 1 3 3v3" fill="none" stroke="#2aa8e0" stroke-width="1.800"/>
<rect x="632" y="1051.500" width="5.500" height="5.500" fill="#f25022"/><rect x="638.500" y="1051.500" width="5.500" height="5.500" fill="#7fba00"/>
<rect x="632" y="1058" width="5.500" height="5.500" fill="#00a4ef"/><rect x="638.500" y="1058" width="5.500" height="5.500" fill="#ffb900"/>
<!-- mail -->
<path d="M685 1053 700 1042.500 715.500 1053V1066H685z" fill="#fff"/>
<path d="M686 1053 700 1059 715 1053 697 1057M700 1059 714 1066" fill="none" stroke="#1f2b35" stroke-width="1.300"/>
<!-- word -->
<rect x="754" y="1041" width="22" height="27" rx="1" fill="#185abd"/>
<rect x="754" y="1041" width="22" height="7" fill="#41a5ee"/>
<rect x="754" y="1048" width="22" height="7" fill="#2b7cd3"/>
<rect x="754" y="1061" width="22" height="7" fill="#103f91"/>
<rect x="747" y="1048" width="16" height="14" rx="1" fill="#1e55b3"/>
<text x="749" y="1059.500" class="w" style="font-size:11px;font-weight:bold">W</text>
<!-- excel -->
<g transform="translate(809,1041) scale(1.450,1.350)"><use href="#xl"/></g>
<!-- vscode -->
<path d="M893 1040 901 1044V1066L893 1070 880 1058 874 1063 871 1061V1049L874 1047 880 1052z" fill="#0078d4"/>
<path d="M893 1048 884 1055 893 1062z" fill="#1e2b33"/>
<path d="M876 1051 880 1055 876 1059z" fill="#1e2b33"/>
<path d="M893 1040 901 1044V1066L893 1070z" fill="#1f9cf0"/>
<!-- chrome -->
<path d="M948 1055 935 1047.500A15 15 0 0 1 961 1047.500z" fill="#ea4335"/>
<path d="M948 1055 961 1047.500A15 15 0 0 1 948 1070z" fill="#fbbc05"/>
<path d="M948 1055 948 1070A15 15 0 0 1 935 1047.500z" fill="#34a853"/>
<circle cx="948" cy="1055" r="7.500" fill="#fff"/><circle cx="948" cy="1055" r="5.800" fill="#4285f4"/>
<!-- whatsapp -->
<path d="M997 1068 999 1061A13 13 0 1 1 1003.500 1066z" fill="#1f2b35" stroke="#25d366" stroke-width="2.800"/>
<path d="M1004 1048c-2 2-1 6 2 9s7 5 10 3l1-3-4-2-2 1.500c-2-1-4-3-4.500-5l1.500-1.500-1.500-4z" fill="#25d366"/>
<!-- facebook -->
<circle cx="1072" cy="1055" r="15" fill="#1285f4"/>
<path d="M1075 1070v-11h4l.6-5h-4.600v-3c0-1.400.6-2.400 2.600-2.400h2.200v-4.300c-.6-.1-2-.3-3.600-.3-3.600 0-6 2.200-6 6.200v3.800h-4v5h4v11z" fill="#fff"/>
<!-- notes + badge -->
<rect x="1121" y="1042" width="26" height="22" rx="1" fill="#0f7fd0"/>
<rect x="1125" y="1060" width="20" height="8" fill="#0a5ea6"/>
<rect x="1128" y="1044" width="8" height="1.500" fill="#07406f"/>
<circle cx="1149.500" cy="1064" r="11.500" fill="#2a2f33" stroke="#aaa"/>
<text x="1141" y="1070" class="w" style="font-size:16px" textLength="17" lengthAdjust="spacingAndGlyphs">43</text>
<!-- wondershare -->
<path d="M1196 1041 1206 1045 1210 1055 1206 1065 1196 1069 1186 1065 1182 1055 1186 1045z" fill="#22303c" stroke="#dfe5ea" stroke-width="1.500"/>
<text x="1186.500" y="1061" fill="#d4dce2" style="font-size:17px;font-weight:bold" textLength="19" lengthAdjust="spacingAndGlyphs">W</text>
<!-- paint -->
<ellipse cx="1256" cy="1057" rx="12" ry="10" fill="#dfe8ee" transform="rotate(-18 1256 1057)"/>
<circle cx="1250" cy="1053" r="2.200" fill="#3b9dd6"/><circle cx="1256" cy="1050" r="2.200" fill="#e2574c"/><circle cx="1248" cy="1059" r="2.200" fill="#5ab04c"/><circle cx="1262" cy="1051" r="2" fill="#f2c230"/>
<path d="M1272 1042 1261 1060 1258 1069 1263 1062z" fill="#d89a4a" stroke="#c87a2a"/>
<!-- bluetooth -->
<rect x="1309.500" y="1041" width="21" height="28" rx="10" fill="#0a7bf2"/>
<path d="M1314.500 1049.500 1326 1060 1320 1065.500V1044.500L1326 1050 1314.500 1060.500" fill="none" stroke="#fff" stroke-width="1.700"/>

<!-- tray -->
<rect x="1474" y="1046.500" width="28" height="17.500" rx="2" fill="none" stroke="#fff" stroke-width="1.600"/>
<path d="M1497.500 1047V1062" stroke="#fff"/>
<rect x="1478" y="1051" width="8" height="8" fill="none" stroke="#fff" stroke-width="1.200"/>
<path d="M1488 1051.500h7M1488 1055h7M1488 1058.500h7M1478 1061.500h17" stroke="#fff" stroke-width="1.100"/>
<text x="1513.500" y="1061.700" class="w" style="font-size:17px" textLength="36.500" lengthAdjust="spacingAndGlyphs">28°C</text>
<path d="M1582.500 1059 1590 1051 1597.500 1059" class="tray"/>
<rect x="1614.500" y="1050.500" width="9.500" height="10.500" rx="1.500" class="tray"/>
<path d="M1624 1054l4-2.500v8l-4-2.500M1616 1047c2-1 5-1 7 0M1616 1064c2 1 5 1 7 0" class="tray" style="stroke-width:1"/>
<rect x="1641.500" y="1051.500" width="17" height="9.500" class="tray"/>
<rect x="1643" y="1053" width="3.500" height="6.500" fill="#fff"/><path d="M1660 1054v4" class="tray"/>
<circle cx="1679.500" cy="1055" r="9.200" class="tray"/>
<ellipse cx="1679.500" cy="1055" rx="4" ry="9.200" class="tray" style="stroke-width:1"/>
<path d="M1671 1051.500h17M1671 1058.500h17" class="tray" style="stroke-width:1"/>
<circle cx="1686" cy="1061" r="3.500" fill="#222" stroke="#fff"/>
<path d="M1700.500 1052h3l4.500-4v14l-4.500-4h-3z" class="tray" style="stroke-width:1.200"/>
<path d="M1711 1051.500c1.500 2 1.500 5 0 7M1714.500 1049c2.500 3.500 2.500 9 0 12.500" fill="none" stroke="#aaa"/><path d="M1718 1047c3 5 3 11 0 16" fill="none" stroke="#666"/>
<text x="1734" y="1061" class="w" style="font-size:15px" textLength="27.600" lengthAdjust="spacingAndGlyphs">ENG</text>
<text x="1783" y="1048" class="w" style="font-size:15px" textLength="58" lengthAdjust="spacingAndGlyphs">12:35 PM</text>
<text x="1783" y="1071.700" class="w" style="font-size:15px" textLength="59" lengthAdjust="spacingAndGlyphs">9/9/2024</text>
<path d="M1869 1045.500H1889V1062H1881L1876 1067V1062H1869z" fill="#fff"/>
<path d="M1873 1050h12M1873 1054h12M1873 1058h12" stroke="#222" stroke-width="1"/>
<circle cx="1888" cy="1065" r="9" fill="#2a2f33" stroke="#999"/>
<text x="1884.500" y="1070.500" class="w" style="font-size:15px">1</text>
</svg>
</body>
</html>
